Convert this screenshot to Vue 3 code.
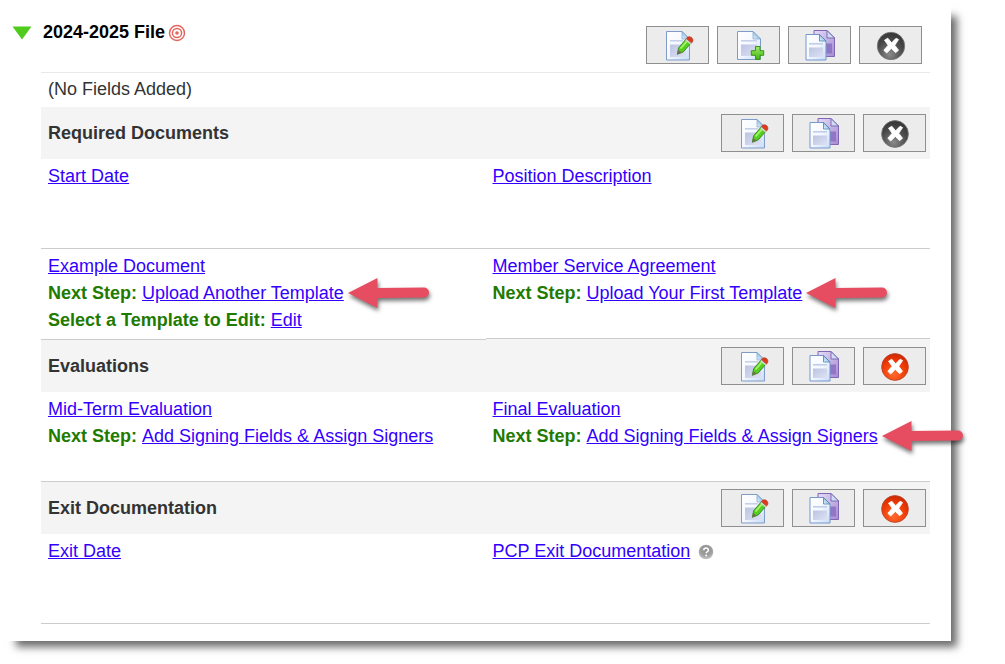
<script setup>
import { ref } from 'vue'

const open = ref(true)

const sections = [
  {
    title: 'Required Documents',
    removable: false,
    rows: [
      [{ name: 'Start Date' }, { name: 'Position Description' }],
      [
        {
          name: 'Example Document',
          steps: [
            { label: 'Next Step:', link: 'Upload Another Template', arrow: true },
            { label: 'Select a Template to Edit:', link: 'Edit' },
          ],
        },
        {
          name: 'Member Service Agreement',
          steps: [{ label: 'Next Step:', link: 'Upload Your First Template', arrow: true }],
        },
      ],
    ],
  },
  {
    title: 'Evaluations',
    removable: true,
    rows: [
      [
        {
          name: 'Mid-Term Evaluation',
          steps: [{ label: 'Next Step:', link: 'Add Signing Fields & Assign Signers' }],
        },
        {
          name: 'Final Evaluation',
          steps: [{ label: 'Next Step:', link: 'Add Signing Fields & Assign Signers', arrow: true }],
        },
      ],
    ],
  },
  {
    title: 'Exit Documentation',
    removable: true,
    rows: [[{ name: 'Exit Date' }, { name: 'PCP Exit Documentation', help: true }]],
  },
]

const labels = { edit: 'Edit', add: 'Add', copy: 'Copy', remove: 'Remove' }
const fileActions = ['edit', 'add', 'copy', 'remove']
const sectionActions = ['edit', 'copy', 'remove']
</script>

<template>
  <svg class="defs" aria-hidden="true">
    <defs>
      <linearGradient id="paper" x1="0" y1="0" x2="1" y2="1">
        <stop offset="0" stop-color="#ffffff" />
        <stop offset="0.5" stop-color="#f4f8ff" />
        <stop offset="1" stop-color="#c9dcf8" />
      </linearGradient>
      <linearGradient id="block" x1="0" y1="0" x2="1" y2="1">
        <stop offset="0" stop-color="#bcc4e2" />
        <stop offset="1" stop-color="#dde1f3" />
      </linearGradient>
      <linearGradient id="violet" x1="0" y1="0" x2="1" y2="1">
        <stop offset="0" stop-color="#e4dcf5" />
        <stop offset="1" stop-color="#a48bd2" />
      </linearGradient>
      <linearGradient id="fold" x1="0" y1="1" x2="1" y2="0">
        <stop offset="0" stop-color="#e8f6ff" />
        <stop offset="1" stop-color="#5b9bd0" />
      </linearGradient>
      <linearGradient id="plus" x1="0" y1="0" x2="0" y2="1">
        <stop offset="0" stop-color="#a4ec6a" />
        <stop offset="1" stop-color="#3fb50e" />
      </linearGradient>
      <radialGradient id="dark" cx="0.45" cy="0.8" r="0.8">
        <stop offset="0" stop-color="#8a8a8a" />
        <stop offset="0.6" stop-color="#4a4a4a" />
        <stop offset="1" stop-color="#343434" />
      </radialGradient>
      <radialGradient id="red" cx="0.45" cy="0.75" r="0.8">
        <stop offset="0" stop-color="#ff6a2c" />
        <stop offset="0.55" stop-color="#f03c08" />
        <stop offset="1" stop-color="#c82400" />
      </radialGradient>
      <radialGradient id="ball" cx="0.5" cy="0.35" r="0.7">
        <stop offset="0" stop-color="#8c8c8c" />
        <stop offset="0.6" stop-color="#a0a0a0" />
        <stop offset="1" stop-color="#d0d0d0" />
      </radialGradient>
      <symbol id="icon-edit" viewBox="0 0 32 32">
        <path d="M4.500 2.500H20l7.500 7.500V31h-23z" fill="url(#paper)" stroke="#7f9cc9" />
        <path d="M20 2.500V10h7.500z" fill="url(#fold)" stroke="#6c97c4" stroke-width=".6" />
        <path d="M8 11.800h13" stroke="#c3cfe8" stroke-width="1.500" />
        <path d="M8 15.500h16v12.500H8z" fill="url(#block)" />
        <path d="M15.300 25.300l1.300-6.500 7.500-8.800 5 4-8 9z" fill="#55cf1e" stroke="#37861b" stroke-width=".9" />
        <path d="M18.500 19.500l6.700-7.700" stroke="#a7f36d" stroke-width="1.800" />
        <path d="M15.300 25.300l1-4.300 3.200 2.600z" fill="#7a6a55" />
        <path d="M23.300 11.300l1.400-1.600 5 4.200-1.400 1.600z" fill="#cfd6cf" />
        <path d="M24.300 9.600c2.200-4.200 8.200-.8 6.300 3.100l-1 1.300z" fill="#dd3b20" stroke="#ad3a25" stroke-width=".6" />
      </symbol>
      <symbol id="icon-add" viewBox="0 0 32 32">
        <path d="M4.500 2.500H20l7.500 7.500V30.500h-23z" fill="url(#paper)" stroke="#7f9cc9" />
        <path d="M20 2.500V10h7.500z" fill="url(#fold)" stroke="#6c97c4" stroke-width=".6" />
        <path d="M8 11.800h16" stroke="#c3cfe8" stroke-width="1.500" />
        <path d="M8 15.500h16v11.500H8z" fill="url(#block)" />
        <path d="M22.500 17.500h4.500v4.200h3.700v4.600h-3.700v4.200h-4.500v-4.200h-4.200v-4.600h4.200z" fill="url(#plus)" stroke="#379414" />
      </symbol>
      <symbol id="icon-copy" viewBox="0 0 32 32">
        <path d="M10 1.500h13l7.500 7.500v18.500H10z" fill="url(#violet)" stroke="#8266b5" />
        <path d="M23 1.500V9h7.500z" fill="#cfdcf5" stroke="#6a55a8" stroke-width=".8" />
        <path d="M22 14.500h6v10h-6z" fill="#9176c5" />
        <path d="M2 5.500h13.500L22 12v19H2z" fill="url(#paper)" stroke="#7597cb" />
        <path d="M15.500 5.500V12H22z" fill="url(#fold)" stroke="#4a80b8" stroke-width=".8" />
        <path d="M5 14.800h14" stroke="#bccbe8" stroke-width="1.500" />
        <path d="M5 18.500h14v9.500H5z" fill="url(#block)" />
      </symbol>
      <symbol id="icon-cross" viewBox="0 0 32 32">
        <path d="M9.500 11.200l3.300-2 3.800 4.600 4.500-4.600 2.500 1.400-3.800 5.700 3.700 5-3 2.400-4.200-4.300-4.600 4.700-2.900-2.800 4.300-5z" fill="#fff" stroke="#fff" stroke-width=".8" stroke-linejoin="round" />
      </symbol>
    </defs>
  </svg>

  <div class="page">
    <main class="panel">
      <button class="toggle" type="button" :aria-expanded="open" aria-label="Toggle file" @click="open = !open">
        <svg width="20" height="14" viewBox="0 0 20 14"><path d="M.5.500h19L10 13.500z" fill="#4fcb1e" /></svg>
      </button>
      <div class="file">
        <header class="file-head">
          <h1>
            2024-2025 File
            <svg class="target" width="18" height="18" viewBox="0 0 18 18" fill="none" stroke="#e4665c">
              <circle cx="9" cy="9" r="7.500" stroke-width="1.500" />
              <circle cx="9" cy="9" r="4.600" stroke-width="1.500" />
              <circle cx="9" cy="9" r="1.800" fill="#e4665c" stroke="none" />
            </svg>
          </h1>
          <div class="actions">
            <button v-for="a in fileActions" :key="a" type="button" :aria-label="labels[a]">
              <svg width="32" height="32" viewBox="0 0 32 32">
                <template v-if="a === 'remove'">
                  <circle cx="16" cy="17" r="13.700" fill="url(#dark)" stroke="#777" stroke-width=".8" />
                  <use href="#icon-cross" />
                </template>
                <use v-else :href="'#icon-' + a" />
              </svg>
            </button>
          </div>
        </header>

        <template v-if="open">
          <p class="empty">(No Fields Added)</p>
          <section v-for="s in sections" :key="s.title">
            <header class="section-head">
              <h2>{{ s.title }}</h2>
              <div class="actions">
                <button v-for="a in sectionActions" :key="a" type="button" :aria-label="labels[a]">
                  <svg width="32" height="32" viewBox="0 0 32 32">
                    <template v-if="a === 'remove'">
                      <circle
                        cx="16" cy="17" r="13.400" stroke-width=".8"
                        :fill="s.removable ? 'url(#red)' : 'url(#dark)'"
                        :stroke="s.removable ? '#b54a30' : '#777'"
                      />
                      <use href="#icon-cross" />
                    </template>
                    <use v-else :href="'#icon-' + a" />
                  </svg>
                </button>
              </div>
            </header>
            <div v-for="(row, i) in s.rows" :key="i" class="row">
              <div v-for="doc in row" :key="doc.name" class="doc">
                <div class="line">
                  <a href="#">{{ doc.name }}</a>
                  <svg v-if="doc.help" class="help" width="16" height="16" viewBox="0 0 16 16" role="img" aria-label="Help">
                    <circle cx="8" cy="8" r="7.300" fill="url(#ball)" />
                    <path d="M5.800 6.300c0-3 4.600-2.900 4.600-.3 0 1.600-2.200 1.500-2.200 3.300" fill="none" stroke="#fff" stroke-width="1.600" />
                    <circle cx="8.200" cy="11.500" r="1" fill="#fff" />
                  </svg>
                </div>
                <div v-for="step in doc.steps" :key="step.label" class="line">
                  <strong>{{ step.label }}</strong>{{ ' ' }}<span class="step-link"><a href="#">{{ step.link }}</a>
                    <svg v-if="step.arrow" class="arrow" width="82" height="30" viewBox="0 0 82 30" aria-hidden="true">
                      <path d="M0 15L29.500 0V10L76 9.500a4.900 4.900 0 0 1 0 10L29.500 20V30z" fill="#e64d61" />
                    </svg>
                  </span>
                </div>
              </div>
            </div>
          </section>
        </template>
      </div>
    </main>
  </div>
</template>

<style>
body {
  background: #fff;
}
</style>

<style scoped>
.defs {
  position: absolute;
  width: 0;
  height: 0;
}
.page {
  padding: 0 54px 23px 0;
}
.panel {
  display: grid;
  grid-template-columns: 41px minmax(0, 1fr);
  padding: 0 21px 17px 0;
  background: #fff;
  box-shadow: 11px 11px 8px -5px rgba(0, 0, 0, 0.58);
  font: 18px/27px "Liberation Sans", Arial, sans-serif;
  color: #333;
}
button {
  padding: 0;
  cursor: pointer;
}
.toggle {
  align-self: start;
  display: flex;
  margin: 26px 0 0 12px;
  width: 20px;
  border: 0;
  background: none;
}
.file-head {
  display: flex;
  justify-content: space-between;
  align-items: flex-start;
  padding: 19px 8px 8px 2px;
  border-bottom: 1px solid #e8e8e8;
}
h1,
h2,
p {
  margin: 0;
  font-size: 18px;
  line-height: 27px;
}
h1 {
  display: flex;
  align-items: center;
  gap: 3px;
  color: #000;
}
.actions {
  display: flex;
  gap: 8px;
}
.file-head .actions {
  padding-top: 7px;
}
.actions button {
  display: flex;
  justify-content: center;
  align-items: center;
  width: 63px;
  height: 38px;
  border: 1px solid #8f8f8f;
  background: #ececec;
}
.empty {
  padding: 3px 7px 4px;
}
.section-head {
  display: flex;
  justify-content: space-between;
  align-items: center;
  padding: 7px 4px 7px 7px;
  background: #f4f4f4;
}
.row {
  display: grid;
  grid-template-columns: 1fr 1fr;
  align-items: start;
  background: #f4f4f4;
}
.doc {
  box-sizing: border-box;
  min-height: 90px;
  padding: 4px 7px 5px;
  border-bottom: 1px solid #ccc;
  background: #fff;
}
.line {
  white-space: nowrap;
}
a {
  color: #30f;
}
strong {
  color: #1f7a00;
}
.step-link {
  display: inline-block;
  position: relative;
}
.arrow {
  position: absolute;
  left: 100%;
  top: -2px;
  margin-left: 4px;
  overflow: visible;
  filter: drop-shadow(1px 3px 2px rgba(0, 0, 0, 0.55));
}
.help {
  margin-left: 8px;
  vertical-align: -3px;
}
</style>
